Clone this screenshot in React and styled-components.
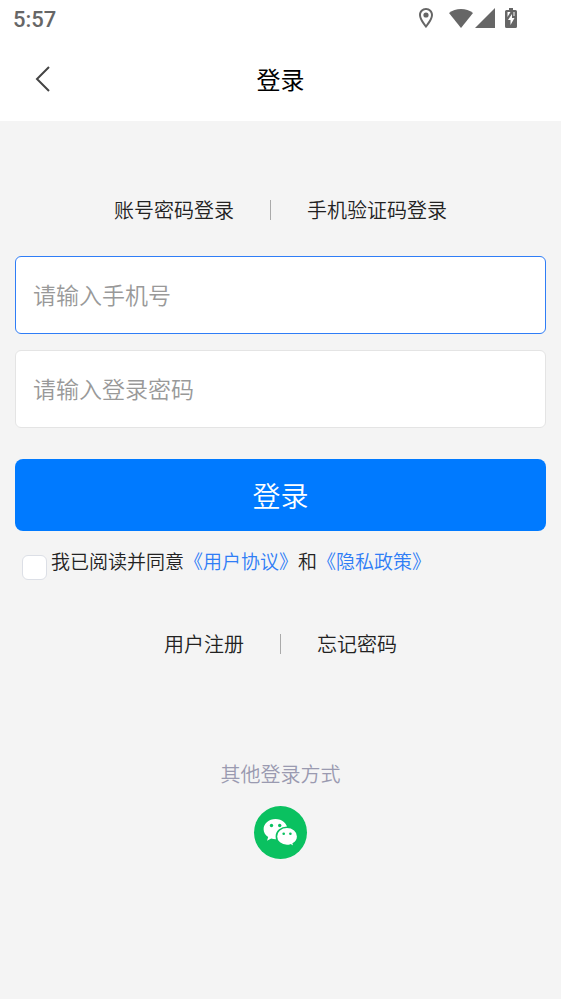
import React from 'react';
import styled, { createGlobalStyle } from 'styled-components';

const GlobalStyle = createGlobalStyle`
  * {
    box-sizing: border-box;
  }

  body {
    margin: 0;
    background-color: #f4f4f4;
    color: #222;
    font-family: 'Noto Sans CJK SC', sans-serif;
    font-weight: 350;
  }

  button,
  input {
    font-family: inherit;
    font-weight: inherit;
  }
`;

const StatusBar = styled.div`
  display: flex;
  align-items: center;
  justify-content: space-between;
  height: 38px;
  padding: 0 44px 0 13px;
  background-color: #fff;
  color: #666;
`;

const Time = styled.span`
  padding-top: 2px;
  font-family: Roboto, sans-serif;
  font-size: 22px;
  font-weight: 500;
  line-height: 32px;
`;

const StatusIcons = styled.div`
  display: flex;
  align-items: center;
  padding-bottom: 2px;

  svg {
    display: block;
    fill: #666;
  }
`;

const PinIcon = styled.svg`
  margin-right: 16px;
`;

const WifiIcon = styled.svg`
  margin-right: 2px;
`;

const SignalIcon = styled.svg`
  margin-right: 10px;
`;

const Header = styled.header`
  display: grid;
  grid-template-columns: 86px 1fr 86px;
  align-items: center;
  height: 83px;
  padding-bottom: 2px;
  background-color: #fff;
`;

const BackButton = styled.button`
  display: flex;
  align-items: center;
  justify-content: center;
  height: 48px;
  padding: 0;
  border: 0;
  background: none;
  cursor: pointer;
`;

const Title = styled.h1`
  margin: 0;
  color: #000;
  font-size: 24px;
  font-weight: 400;
  line-height: 32px;
  text-align: center;
`;

const Main = styled.main`
  padding: 73px 15px 0;
`;

const LinkRow = styled.nav`
  display: flex;
  align-items: center;
  justify-content: center;
  gap: 36px;
  height: 32px;
`;

const TextButton = styled.button`
  padding: 0;
  border: 0;
  background: none;
  color: #222;
  font-size: 20px;
  line-height: 32px;
  cursor: pointer;
`;

const TextLink = styled.a`
  color: #222;
  font-size: 20px;
  line-height: 32px;
  text-decoration: none;
`;

const Divider = styled.span`
  width: 1px;
  height: 20px;
  background-color: #aaa;
`;

const Form = styled.form`
  display: flex;
  flex-direction: column;
  gap: 16px;
  margin: 30px 0 48px;
`;

const Field = styled.input`
  width: 100%;
  height: 78px;
  padding: 0 17px 2px;
  border: 1px solid ${props => (props.$active ? '#2f7df6' : '#e4e4e4')};
  border-radius: 6px;
  outline: none;
  background-color: #fff;
  color: #222;
  font-size: 23px;

  &::placeholder {
    color: #999;
    opacity: 1;
  }
`;

const SubmitButton = styled.button`
  height: 72px;
  margin-top: 15px;
  padding: 0;
  border: 0;
  border-radius: 8px;
  background-color: #007aff;
  color: #fff;
  font-size: 28px;
  line-height: 72px;
  cursor: pointer;
`;

const Agreement = styled.div`
  display: flex;
  align-items: flex-start;
  gap: 4px;
  padding: 0 7px;
`;

const Checkbox = styled.input`
  appearance: none;
  flex: none;
  width: 25px;
  height: 25px;
  margin: 8px 0 0;
  border: 1px solid #dcdfe6;
  border-radius: 6px;
  background-color: #fff;

  &:checked {
    border-color: #007aff;
    background-color: #007aff;
  }
`;

const AgreementText = styled.label`
  font-size: 19px;
  line-height: 28px;
`;

const PolicyLink = styled.a`
  color: #2f7df6;
  text-decoration: none;
`;

const OtherLogin = styled.section`
  display: flex;
  flex-direction: column;
  align-items: center;
  gap: 16px;
  margin-top: 98px;
`;

const OtherTitle = styled.h2`
  margin: 0;
  color: #9a9ab0;
  font-size: 20px;
  font-weight: inherit;
  line-height: 32px;
`;

const WechatButton = styled.button`
  width: 53px;
  height: 53px;
  padding: 0;
  border: 0;
  border-radius: 50%;
  background-color: #0ac160;
  cursor: pointer;

  svg {
    display: block;
  }
`;

const Wechat = () => (
  <svg width="53" height="53" viewBox="0 0 53 53">
    <path
      fill="#fff"
      d="M21.500 13C15 13 9.600 17.500 9.600 23.200C9.600 26.500 11.400 29.200 14.200 31.100L13 34.700L17.200 32.600C18.600 33 20 33.300 21.500 33.300C28 33.300 33.400 28.900 33.400 23.200S28 13 21.500 13Z"
    />
    <path
      fill="#fff"
      stroke="#0ac160"
      strokeWidth="1.600"
      d="M33 21.300C27.100 21.300 22.400 25.200 22.400 30.400S27.100 39.600 33 39.600C34.200 39.600 35.500 39.400 36.600 39L40.300 41.300L39.300 37.700C42 36 43.700 33.400 43.700 30.400C43.700 25.200 38.900 21.300 33 21.300Z"
    />
    <g fill="#0ac160">
      <circle cx="17.500" cy="19.500" r="1.700" />
      <circle cx="25.700" cy="19.500" r="1.700" />
      <circle cx="29.700" cy="27.800" r="1.300" />
      <circle cx="36.400" cy="27.800" r="1.300" />
    </g>
  </svg>
);

export default function App() {
  return (
    <>
      <GlobalStyle />
      <StatusBar>
        <Time>5:57</Time>
        <StatusIcons>
          <PinIcon width="14" height="20" viewBox="5 2 14 20">
            <path d="M12 2C8.100 2 5 5.100 5 9c0 5.300 7 13 7 13s7-7.700 7-13c0-3.900-3.100-7-7-7zm0 2c2.800 0 5 2.200 5 5 0 2.900-2.900 7.200-5 9.900C9.900 16.200 7 11.900 7 9c0-2.800 2.200-5 5-5z" />
            <circle cx="12" cy="9" r="2.600" />
          </PinIcon>
          <WifiIcon width="24" height="20" viewBox="0 0 24 20">
            <path d="M12 1C7.500 1 3.400 2.500 0 5L12 20L24 5C20.600 2.500 16.500 1 12 1Z" />
          </WifiIcon>
          <SignalIcon width="20" height="20" viewBox="0 0 20 20">
            <path d="M0 20H20V0Z" />
          </SignalIcon>
          <svg width="12" height="20" viewBox="0 0 12 20">
            <path
              fillRule="evenodd"
              d="M4 0H8V2H10.500Q12 2 12 3.500V18.500Q12 20 10.500 20H1.500Q0 20 0 18.500V3.500Q0 2 1.500 2H4ZM7 6L3 12H5.500V17L9.500 10H7ZM2.500 4V9L5.500 4ZM8.500 4V8H9.500V4Z"
            />
          </svg>
        </StatusIcons>
      </StatusBar>
      <Header>
        <BackButton type="button" aria-label="返回">
          <svg width="16" height="26" viewBox="0 0 16 26" fill="none" stroke="#444" strokeWidth="2">
            <path d="M14 1L2 13L14 25" />
          </svg>
        </BackButton>
        <Title>登录</Title>
      </Header>
      <Main>
        <LinkRow>
          <TextButton type="button">账号密码登录</TextButton>
          <Divider />
          <TextButton type="button">手机验证码登录</TextButton>
        </LinkRow>
        <Form onSubmit={e => e.preventDefault()}>
          <Field $active type="tel" placeholder="请输入手机号" aria-label="手机号" />
          <Field type="password" placeholder="请输入登录密码" aria-label="登录密码" />
          <SubmitButton type="submit">登录</SubmitButton>
          <Agreement>
            <Checkbox type="checkbox" id="agree" />
            <AgreementText htmlFor="agree">
              我已阅读并同意
              <PolicyLink href="#agreement">《用户协议》</PolicyLink>
              和
              <PolicyLink href="#privacy">《隐私政策》</PolicyLink>
            </AgreementText>
          </Agreement>
        </Form>
        <LinkRow>
          <TextLink href="#register">用户注册</TextLink>
          <Divider />
          <TextLink href="#forgot">忘记密码</TextLink>
        </LinkRow>
        <OtherLogin>
          <OtherTitle>其他登录方式</OtherTitle>
          <WechatButton type="button" aria-label="微信登录">
            <Wechat />
          </WechatButton>
        </OtherLogin>
      </Main>
    </>
  );
}
